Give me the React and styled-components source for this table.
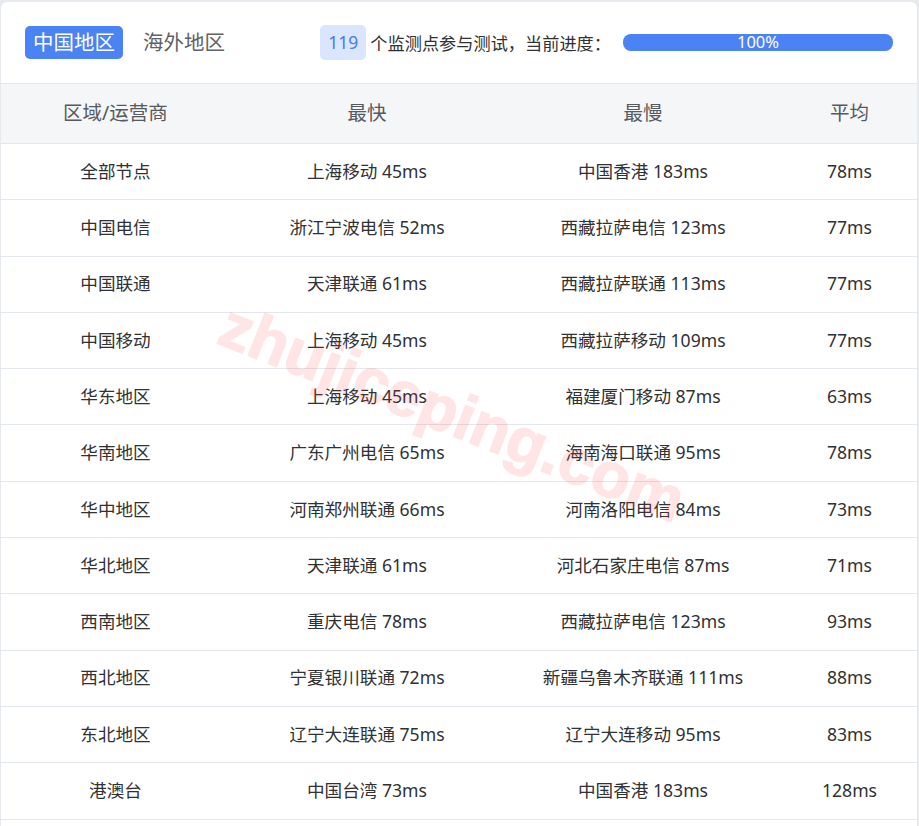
import React from 'react';
import styled, { createGlobalStyle } from 'styled-components';

const rows = [
    ['全部节点', '上海移动 45ms', '中国香港 183ms', '78ms'],
    ['中国电信', '浙江宁波电信 52ms', '西藏拉萨电信 123ms', '77ms'],
    ['中国联通', '天津联通 61ms', '西藏拉萨联通 113ms', '77ms'],
    ['中国移动', '上海移动 45ms', '西藏拉萨移动 109ms', '77ms'],
    ['华东地区', '上海移动 45ms', '福建厦门移动 87ms', '63ms'],
    ['华南地区', '广东广州电信 65ms', '海南海口联通 95ms', '78ms'],
    ['华中地区', '河南郑州联通 66ms', '河南洛阳电信 84ms', '73ms'],
    ['华北地区', '天津联通 61ms', '河北石家庄电信 87ms', '71ms'],
    ['西南地区', '重庆电信 78ms', '西藏拉萨电信 123ms', '93ms'],
    ['西北地区', '宁夏银川联通 72ms', '新疆乌鲁木齐联通 111ms', '88ms'],
    ['东北地区', '辽宁大连联通 75ms', '辽宁大连移动 95ms', '83ms'],
    ['港澳台', '中国台湾 73ms', '中国香港 183ms', '128ms'],
];

const App = () => {
    const progress = 100;
    return (
        <>
            <GlobalStyle />
            <Card>
                <Header>
                    <Tabs>
                        <Tab active>中国地区</Tab>
                        <Tab>海外地区</Tab>
                    </Tabs>
                    <Status>
                        <Count>119</Count>
                        <StatusText>个监测点参与测试，当前进度：</StatusText>
                        <Progress>
                            <ProgressFill style={{ width: `${progress}%` }} />
                            <ProgressLabel>{progress}%</ProgressLabel>
                        </Progress>
                    </Status>
                </Header>
                <Table>
                    <HeadRow>
                        <HeadCell>区域/运营商</HeadCell>
                        <HeadCell>最快</HeadCell>
                        <HeadCell>最慢</HeadCell>
                        <HeadCell>平均</HeadCell>
                    </HeadRow>
                    {rows.map((row) => (
                        <Row key={row[0]}>
                            {row.map((cell, i) => (
                                <Cell key={i}>{cell}</Cell>
                            ))}
                        </Row>
                    ))}
                </Table>
                <Watermark>zhujiceping.com</Watermark>
            </Card>
        </>
    );
};

export default App;

const GlobalStyle = createGlobalStyle`
body {
    margin: 0;
    background: #e6e9ed;
    font-family: "Noto Sans", "Noto Sans CJK SC", sans-serif;
}
`;

const Card = styled.div`
position: relative;
overflow: hidden;
margin: 2px 2px 0 1px;
background: #fff;
border-radius: 6px 6px 0 0;
min-height: 830px;
`;

const Header = styled.div`
display: flex;
align-items: center;
justify-content: space-between;
height: 81px;
padding: 0 24px 0 24px;
border-bottom: 1px solid #e4e7ec;
`;

const Tabs = styled.div`
display: flex;
align-items: center;
gap: 20px;
`;

const Tab = styled.div`
height: 33px;
line-height: 32px;
padding: 0 ${(p) => (p.active ? '8px' : '0')};
border-radius: 5px;
font-size: 20.5px;
background: ${(p) => (p.active ? '#4b82f4' : 'transparent')};
color: ${(p) => (p.active ? '#fff' : '#606266')};
`;

const Status = styled.div`
display: flex;
align-items: center;
`;

const Count = styled.span`
height: 35px;
line-height: 35px;
padding: 0 8px;
border-radius: 5px;
background: #dae6ff;
color: #4a7ce8;
font-size: 17.5px;
`;

const StatusText = styled.span`
margin-left: 4px;
font-size: 17.2px;
color: #303133;
`;

const Progress = styled.div`
position: relative;
width: 270px;
height: 17px;
margin-left: 12px;
border-radius: 8px;
background: #ebeef5;
`;

const ProgressFill = styled.div`
height: 100%;
background: #4b82f4;
border-radius: 8px;
`;

const ProgressLabel = styled.span`
position: absolute;
left: 0;
right: 0;
top: -3px;
text-align: center;
line-height: 22px;
font-size: 16.5px;
color: #fff;
`;

const Table = styled.div`
display: flex;
flex-direction: column;
`;

const HeadRow = styled.div`
display: grid;
grid-template-columns: 229px 274px 278px 1fr;
height: 59px;
align-items: center;
background: #f5f6f7;
border-bottom: 1px solid #e4e7ec;
`;

const HeadCell = styled.div`
text-align: center;
font-size: 19.5px;
line-height: 1.3;
padding-bottom: 1px;
color: #555a61;
`;

const Row = styled.div`
display: grid;
grid-template-columns: 229px 274px 278px 1fr;
height: 55.3px;
align-items: center;
border-bottom: 1px solid #e4e7ec;
`;

const Cell = styled.div`
text-align: center;
font-size: 17.6px;
line-height: 1.3;
padding-bottom: 1px;
color: #303133;
`;

const Watermark = styled.div`
position: absolute;
left: 222px;
top: 284px;
font-size: 63px;
font-weight: 700;
font-family: "Liberation Sans", sans-serif;
color: #ff3c3c;
-webkit-text-stroke: 1.5px #ff3c3c;
opacity: 0.13;
transform: rotate(21.5deg);
transform-origin: left center;
pointer-events: none;
white-space: nowrap;
`;
